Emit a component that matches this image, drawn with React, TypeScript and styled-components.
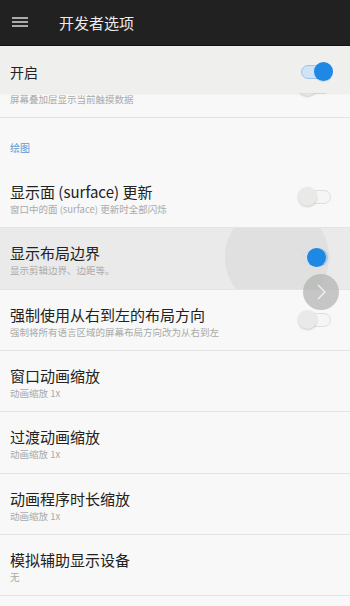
import React from "react";
import styled, { createGlobalStyle, css } from "styled-components";

const Global = createGlobalStyle`
  html, body { margin: 0; padding: 0; background: #f7f8f7; }
  body { font-family: "Noto Sans CJK SC", "Noto Sans", Roboto, sans-serif; -webkit-font-smoothing: antialiased; }
  * { box-sizing: border-box; }
`;

const Screen = styled.div`
  width: 350px;
  height: 606px;
  display: flex;
  flex-direction: column;
  overflow: hidden;
  background: #f7f8f7;
`;

const AppBar = styled.header`
  height: 46px;
  flex: 0 0 46px;
  display: flex;
  align-items: center;
  background: #202120;
  border-bottom: 1px solid #151515;
  padding-left: 12px;
`;

const MenuIcon = styled.svg`
  width: 16px;
  height: 12px;
  margin-top: 1px;
`;

const BarTitle = styled.h1`
  margin: 0 0 0 31px;
  font-size: 15px;
  font-weight: 400;
  color: #ececec;
  line-height: 20px;
`;

const Viewport = styled.main`
  position: relative;
  flex: 1;
  overflow: hidden;
  display: flex;
  flex-direction: column;
`;

const MasterBar = styled.div`
  position: relative;
  z-index: 2;
  height: 47px;
  flex: 0 0 47px;
  display: flex;
  align-items: center;
  justify-content: space-between;
  padding: 4px 16px 0 10px;
  background: #efefee;
  box-shadow: 0 1px 2px rgba(0, 0, 0, 0.06);
`;

const MasterLabel = styled.span`
  font-size: 14px;
  color: #222;
`;

const List = styled.div`
  margin-top: -36.33px;
  display: flex;
  flex-direction: column;
`;

const Row = styled.div<{ $pressed?: boolean }>`
  position: relative;
  overflow: hidden;
  height: 61.33px;
  flex: 0 0 61.33px;
  display: flex;
  align-items: center;
  justify-content: space-between;
  padding: 0 16px 0 10px;
  border-bottom: 1px solid #e3e4e3;
  background: ${(p) => (p.$pressed ? "#e9eae9" : "#f7f8f7")};
`;

const Ripple = styled.span`
  position: absolute;
  left: 225px;
  top: -23px;
  width: 104px;
  height: 104px;
  border-radius: 50%;
  background: #dfe0df;
`;

const TextBlock = styled.div`
  position: relative;
  align-self: flex-start;
  padding-top: 16px;
  display: flex;
  flex-direction: column;
`;

const Title = styled.div<{ $hidden?: boolean }>`
  font-size: 15px;
  line-height: 18px;
  color: #222;
  white-space: nowrap;
  visibility: ${(p) => (p.$hidden ? "hidden" : "visible")};
`;

const Summary = styled.div`
  margin-top: 2px;
  font-size: 9.5px;
  line-height: 13px;
  color: #a9aaa9;
  white-space: nowrap;
`;

const Header = styled.div`
  height: 49px;
  flex: 0 0 49px;
  padding: 23px 10px 0;
  font-size: 10px;
  line-height: 14px;
  color: #5c9ad6;
`;

const SwitchBox = styled.span`
  position: relative;
  width: 36px;
  height: 20px;
  flex: 0 0 36px;
  display: inline-block;
`;

const Track = styled.span<{ $on: boolean; $faded?: boolean }>`
  position: absolute;
  left: 3px;
  right: 3px;
  top: 3px;
  height: 14px;
  border-radius: 7px;
  ${(p) =>
    p.$on
      ? css`
          background: #cfe3f7;
          border: 1.5px solid #9cc4ee;
        `
      : css`
          background: #f4f5f4;
          border: 1.5px solid #dcdddc;
        `}
  opacity: ${(p) => (p.$faded ? 0.12 : 1)};
`;

const Knob = styled.span<{ $on: boolean; $moving?: boolean }>`
  position: absolute;
  top: 0;
  ${(p) => (p.$on ? `right: ${p.$moving ? 8 : 1}px;` : "left: 0;")}
  width: 19px;
  height: 19px;
  border-radius: 50%;
  background: ${(p) => (p.$on ? "#1e88e5" : "#e9e9e8")};
  box-shadow: ${(p) =>
    p.$moving
      ? "2px 0 0 rgba(30,136,229,0.25)"
      : p.$on
      ? "0 1px 1px rgba(0,0,0,0.12)"
      : "0 1px 2px rgba(0,0,0,0.18)"};
`;

const Switch: React.FC<{ on: boolean; moving?: boolean }> = ({ on, moving }) => (
  <SwitchBox>
    <Track $on={on} $faded={moving} />
    <Knob $on={on} $moving={moving} />
  </SwitchBox>
);

const FloatButton = styled.button`
  position: absolute;
  z-index: 3;
  left: 303px;
  top: 228px;
  width: 36px;
  height: 36px;
  border-radius: 50%;
  border: none;
  padding: 0;
  background: rgba(178, 179, 178, 0.72);
  display: flex;
  align-items: center;
  justify-content: center;
`;

type Item = {
  title: string;
  summary: string;
  toggle?: "on" | "off";
  pressed?: boolean;
  covered?: boolean;
};

const drawing: Item[] = [
  { title: "显示面 (surface) 更新", summary: "窗口中的面 (surface) 更新时全部闪烁", toggle: "off" },
  { title: "显示布局边界", summary: "显示剪辑边界、边距等。", toggle: "on", pressed: true },
  { title: "强制使用从右到左的布局方向", summary: "强制将所有语言区域的屏幕布局方向改为从右到左", toggle: "off" },
  { title: "窗口动画缩放", summary: "动画缩放 1x" },
  { title: "过渡动画缩放", summary: "动画缩放 1x" },
  { title: "动画程序时长缩放", summary: "动画缩放 1x" },
  { title: "模拟辅助显示设备", summary: "无" },
];

const PrefRow: React.FC<{ item: Item }> = ({ item }) => (
  <Row $pressed={item.pressed}>
    {item.pressed && <Ripple />}
    <TextBlock>
      <Title $hidden={item.covered}>{item.title}</Title>
      <Summary>{item.summary}</Summary>
    </TextBlock>
    {item.toggle && <Switch on={item.toggle === "on"} moving={item.pressed} />}
  </Row>
);

export default function App() {
  return (
    <Screen>
      <Global />
      <AppBar>
        <MenuIcon viewBox="0 0 16 12">
          <g stroke="#cfcfcf" strokeWidth="1.6">
            <line x1="0" y1="1" x2="16" y2="1" />
            <line x1="0" y1="5" x2="16" y2="5" />
            <line x1="0" y1="9" x2="16" y2="9" />
          </g>
        </MenuIcon>
        <BarTitle>开发者选项</BarTitle>
      </AppBar>
      <Viewport>
        <MasterBar>
          <MasterLabel>开启</MasterLabel>
          <Switch on />
        </MasterBar>
        <List>
          <PrefRow
            item={{ title: "指针位置", summary: "屏幕叠加层显示当前触摸数据", toggle: "off", covered: true }}
          />
          <Header>绘图</Header>
          {drawing.map((it) => (
            <PrefRow key={it.title} item={it} />
          ))}
        </List>
        <FloatButton aria-label="next">
          <svg width="12" height="16" viewBox="0 0 12 16">
            <polyline points="3,1 10,8 3,15" fill="none" stroke="#f2f2f2" strokeWidth="1.3" />
          </svg>
        </FloatButton>
      </Viewport>
    </Screen>
  );
}
